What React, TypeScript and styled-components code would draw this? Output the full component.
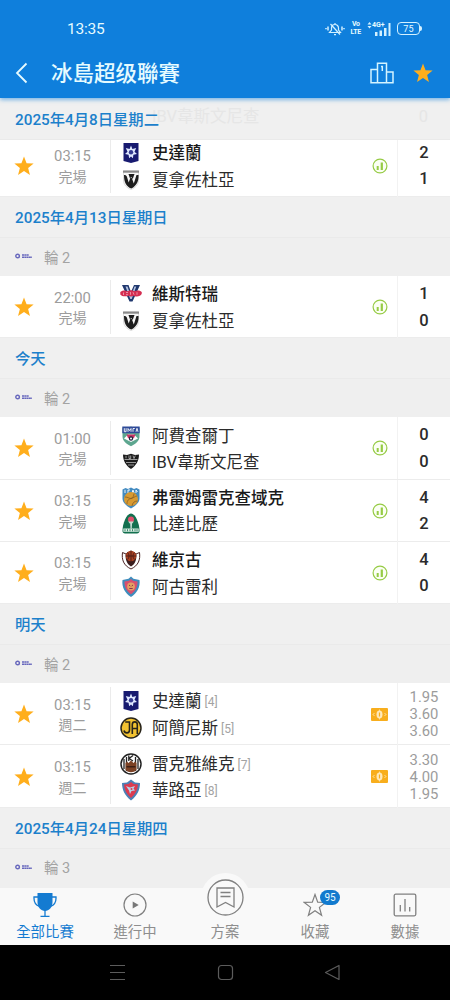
import type { ReactNode } from "react";
import styled, { createGlobalStyle } from "styled-components";

const GlobalStyle = createGlobalStyle`
  * {
    box-sizing: border-box;
  }

  body {
    margin: 0;
    background: #000;
    font-family: Roboto, "Noto Sans CJK TC", sans-serif;
  }

  svg {
    display: block;
  }
`;

type Team = {
  name: string;
  crest: string;
  winner?: boolean;
  rank?: number;
};

type Match = {
  id: number;
  time: string;
  status: string;
  teams: Team[];
  scores?: number[];
  odds?: string[];
};

type Day = {
  title: string;
  round?: string;
  matches: Match[];
};

const days: Day[] = [
  {
    title: "2025年4月13日星期日",
    round: "輪 2",
    matches: [
      {
        id: 2,
        time: "22:00",
        status: "完場",
        teams: [
          { name: "維斯特瑞", crest: "vestri", winner: true },
          { name: "夏拿佐杜亞", crest: "haf" },
        ],
        scores: [1, 0],
      },
    ],
  },
  {
    title: "今天",
    round: "輪 2",
    matches: [
      {
        id: 3,
        time: "01:00",
        status: "完場",
        teams: [
          { name: "阿費查爾丁", crest: "umfa" },
          { name: "IBV韋斯文尼查", crest: "ibv" },
        ],
        scores: [0, 0],
      },
      {
        id: 4,
        time: "03:15",
        status: "完場",
        teams: [
          { name: "弗雷姆雷克查域克", crest: "fram", winner: true },
          { name: "比達比歷", crest: "breida" },
        ],
        scores: [4, 2],
      },
      {
        id: 5,
        time: "03:15",
        status: "完場",
        teams: [
          { name: "維京古", crest: "vikingur", winner: true },
          { name: "阿古雷利", crest: "ka" },
        ],
        scores: [4, 0],
      },
    ],
  },
  {
    title: "明天",
    round: "輪 2",
    matches: [
      {
        id: 6,
        time: "03:15",
        status: "週二",
        teams: [
          { name: "史達蘭", crest: "stjarnan", rank: 4 },
          { name: "阿簡尼斯", crest: "ia", rank: 5 },
        ],
        odds: ["1.95", "3.60", "3.60"],
      },
      {
        id: 7,
        time: "03:15",
        status: "週二",
        teams: [
          { name: "雷克雅維克", crest: "kr", rank: 7 },
          { name: "華路亞", crest: "valur", rank: 8 },
        ],
        odds: ["3.30", "4.00", "1.95"],
      },
    ],
  },
  { title: "2025年4月24日星期四", round: "輪 3", matches: [] },
];

const stickyMatch: Match = {
  id: 1,
  time: "03:15",
  status: "完場",
  teams: [
    { name: "史達蘭", crest: "stjarnan", winner: true },
    { name: "夏拿佐杜亞", crest: "haf" },
  ],
  scores: [2, 1],
};

const crests: Record<string, ReactNode> = {
  stjarnan: (
    <>
      <path d="M3.5 1h15v18l-7.500 2-7.500-2z" fill="#171a70" />
      <path
        d="M11 3.500l1.400 3.600 3.800-1-1.700 3.600 2.500 2.300-3.600.7-.5 3.500L11 14.500l-1.900 1.700-.5-3.500-3.600-.7 2.500-2.300L5.800 6.100l3.800 1z"
        fill="#dfe8ff"
      />
      <circle cx="11" cy="10.300" r="2.200" fill="#353b91" />
    </>
  ),
  haf: (
    <>
      <path
        d="M3.500 2h15v9c0 5-3.500 8-7.500 9.500C7 19 3.500 16 3.500 11z"
        fill="#f7f7f7"
        stroke="#bbb"
        strokeWidth="0.5"
      />
      <path d="M3 1.500h16v2.200H3z" fill="#8a8a8a" />
      <path
        d="M4 6c1.700 0 2.500.5 3 2l1.700 5.500L10.300 9h1.500l2 5.500L16.500 6h2c.3 6-1.700 10.800-7.200 13.500C6.200 17.500 4 13.500 4 6z"
        fill="#1c1c1c"
      />
      <path d="M8.500 5h6l-1.800 5-1.500-2-1.200 1.500z" fill="#1c1c1c" />
    </>
  ),
  vestri: (
    <>
      <path d="M2 2h6.500L11 9l3-7h6l-7.500 16.500h-3z" fill="#20386e" />
      <path d="M5.500 3.500h2l3.500 10 3.500-10h1.700L11.700 16h-1.400z" fill="#b5c4e2" />
      <path
        d="M.3 9c3-2 5-1.500 7.500-.8 2-1.200 4.700-1.200 6.400 0 2.500-.8 5-1.200 7.500.8.5 2-.5 3.500-3.400 4.200-2 .3-3 .7-4.600-.4-2 1-3.500 1-5.200 0C6 13.700 1.500 13.500.3 11.500z"
        fill="#d42e52"
      />
      <path
        d="M3.500 9.500v2.500M6 9.500h2M6 11.700h2M10.500 9v2.800M13 9.200l1 2.500M17 9.200v2.600"
        stroke="#f3b8c6"
        strokeWidth="0.700"
        fill="none"
      />
    </>
  ),
  umfa: (
    <>
      <path
        d="M2.500 2.500l3 1.500L11 1.500 16.500 4l3-1.500v9c0 4-3.500 7.500-8.500 9.700C6 19 2.500 15.500 2.500 11.500z"
        fill="#5da68f"
      />
      <path d="M2.300 1.500h17.400v6.700H2.300z" fill="#2e4a98" />
      <path
        d="M4.300 3.200v3.500h1.800V3.200M8 6.800V3.500l1.500 2L11 3.500v3.300M13 6.800V3.500h1.800M16 6.800l1-3.500 1 3.500"
        stroke="#fff"
        strokeWidth="0.900"
        fill="none"
      />
      <path d="M4 13.500l4-4h6l4 4-7 3.500z" fill="#fff" />
      <path d="M6.500 9.500h9L14 13H8z" fill="#c93463" />
      <circle cx="11" cy="13.500" r="2.200" fill="#20243e" />
      <circle cx="11" cy="13.500" r="1" fill="#fff" />
    </>
  ),
  ibv: (
    <>
      <path
        d="M3 3.500l4 .5 4-1.200L15 4l4-.5c0 6.500-3 11-8 14.500C6 14.500 3 10 3 3.500z"
        fill="#1d1d1d"
      />
      <path
        d="M4.500 8.500h13M6 11.500h10M8 14h6M6 4.800v2.500M9 4.500v3h1.700v-3M13 4.600l1 2.900 1.300-2.900"
        stroke="#cfcfcf"
        strokeWidth="0.700"
        fill="none"
      />
    </>
  ),
  fram: (
    <>
      <path
        d="M2.500 2.500l3-1.500 2.500 1 3-1.500L14 2l2.500-1 3 1.500v9c0 4-4 7.500-8.500 10-4.500-2.500-8.500-6-8.500-10z"
        fill="#438bc1"
      />
      <path
        d="M5 6V2.800M8 6V3h2M12 6l1-3 1 3M16 6V3l1.500 2"
        stroke="#fff"
        strokeWidth="0.900"
        fill="none"
      />
      <circle cx="11" cy="12" r="7" fill="#d89a31" />
      <path
        d="M5 10c3 0 4 1.500 6 1.500S15 9 17 9M7 17c0-4 2-5 4-5.500s3-3 3-5M12 19c.5-3 2-5 5.500-5"
        stroke="#875e26"
        strokeWidth="0.800"
        fill="none"
      />
    </>
  ),
  breida: (
    <>
      <path
        d="M11 .500c4.500 0 8.500 10 8.500 17.500 0 1.500-1 2.500-2.500 2.500H5c-1.500 0-2.500-1-2.500-2.500C2.500 10.500 6.500.500 11 .500z"
        fill="#13704f"
      />
      <path d="M3.300 15.500h15.400v3.300H3.300z" fill="#d9ece2" />
      <path
        d="M5 16.200v2M7.500 16.200v2M10 16.200v2M12.500 16.200v2M15 16.200v2M17 16.200v2"
        stroke="#13704f"
        strokeWidth="0.800"
      />
      <path d="M10.300 8h1.600l-.3 7.500h-1z" fill="#fff" />
      <circle cx="11" cy="6.500" r="3" fill="#e0506d" />
      <path d="M8.200 8.500h5.600l-1.500 2H9.700z" fill="#c4dccf" />
    </>
  ),
  vikingur: (
    <>
      <path
        d="M2.500 3.500L6 5l5-3 5 3 3.500-1.500c1 7-1 13-8.500 16.500C3.500 16.500 1.500 10.500 2.500 3.500z"
        fill="#fff"
        stroke="#4b2425"
        strokeWidth="1"
      />
      <path
        d="M5.500 5.500L11 2l5.500 3.500c0 6-1.500 9.500-5.500 12-4-2.500-5.500-6-5.500-12z"
        fill="#3b1d1e"
      />
      <circle cx="11" cy="7" r="5.300" fill="#a84022" />
      <path
        d="M6 7h10M11 1.700v10.600M7.500 3.500c2 2 2 5 0 7M14.500 3.500c-2 2-2 5 0 7"
        stroke="#401b17"
        strokeWidth="0.800"
        fill="none"
      />
    </>
  ),
  ka: (
    <>
      <path
        d="M11 .5l2.500 2.200L19.500 4c1 7-2.500 13-8.500 17C5 17 1.500 11 2.500 4l6-1.300z"
        fill="#3f8dbd"
      />
      <path
        d="M11 3l2 1.700 4.500.8c.3 5-2.200 9.800-6.500 12.800C6.700 15.300 4.200 10.500 4.500 5.500L9 4.700z"
        fill="#d8506f"
      />
      <circle cx="11" cy="10.500" r="3.900" fill="#e4a062" />
      <path
        d="M9 9l1.300 1M13 9l-1.300 1M9.300 12.500h3.400"
        stroke="#8d3049"
        strokeWidth="1"
      />
    </>
  ),
  ia: (
    <>
      <circle
        cx="11"
        cy="11"
        r="10"
        fill="#f2c231"
        stroke="#28241a"
        strokeWidth="1.500"
      />
      <path
        d="M4 13.500c.5 3 5.500 3.500 5.500-.5V5H5.200M12.300 17V7.500c0-3.500 5-3.500 5 0V17M12.300 11.500h5"
        stroke="#28241a"
        strokeWidth="1.600"
        fill="none"
      />
    </>
  ),
  kr: (
    <>
      <circle
        cx="11"
        cy="11"
        r="10"
        fill="#fff"
        stroke="#222"
        strokeWidth="1.500"
      />
      <path
        d="M4 6v10M6.500 4v14M15.500 4v14M18 6v10"
        stroke="#222"
        strokeWidth="1.300"
      />
      <path
        d="M8.800 2.500V8M13 2.500L9 5.500 13 8"
        stroke="#222"
        strokeWidth="1.300"
        fill="none"
      />
      <path
        d="M5.500 10l1.500-1.500 1.500 1.500L11 7.500l2.500 2.500L15 8.500l1.500 1.500v7c-3 3-8 3-11 0z"
        fill="#7c4225"
      />
      <path d="M6.500 13h9v1.500h-9z" fill="#3f2015" />
    </>
  ),
  valur: (
    <>
      <path
        d="M2 4l5-.5 4-3 4 3 5 .5c0 7-3 13-9 17.500C5 17 2 11 2 4z"
        fill="#4c80b5"
      />
      <path
        d="M4 5.500l4.500-.5L11 3l2.500 2 4.500.5c-.3 5-2.500 9.800-7 13.500C6.500 15.300 4.300 10.500 4 5.500z"
        fill="#dc3b50"
      />
      <path
        d="M6 7l4 1.500L15 7l-1.500 2.500 1.500 2-3.500.5-1.500 3-1-3.500z"
        fill="#b6d2e8"
      />
      <circle cx="11.500" cy="10" r="1" fill="#dc3b50" />
    </>
  ),
};

const Screen = styled.div`
  display: flex;
  flex-direction: column;
  width: 450px;
  height: 1000px;
  overflow: hidden;
`;

const Header = styled.header`
  position: relative;
  z-index: 3;
  flex: none;
  height: 98px;
  background: #0f7fdc;
  color: #e6fbff;
  box-shadow: 0 2px 4px rgba(80, 160, 225, 0.7);
`;

const StatusBar = styled.div`
  display: flex;
  align-items: center;
  justify-content: space-between;
  height: 48px;
  padding: 9px 28px 0 67px;
  font-size: 15.5px;
  letter-spacing: -0.2px;
`;

const StatusIcons = styled.div`
  display: flex;
  align-items: center;
  gap: 6px;
`;

const NetworkLabel = styled.span`
  display: flex;
  flex-direction: column;
  align-items: center;
  font-size: 7px;
  font-weight: 700;
  line-height: 7.500px;
  letter-spacing: -0.3px;
`;

const Signal = styled.div`
  position: relative;
  width: 24px;
  height: 14px;
`;

const SignalLabel = styled.span`
  position: absolute;
  top: 0;
  left: 5px;
  font-size: 7px;
  font-weight: 700;
  line-height: 7px;
  letter-spacing: 0;
`;

const Battery = styled.span`
  display: flex;
  align-items: center;
  justify-content: center;
  width: 23px;
  height: 13px;
  border: 1.5px solid #d4f1ff;
  border-radius: 4px;
  font-size: 9px;
  letter-spacing: 0.3px;
`;

const BatteryTip = styled.span`
  width: 2px;
  height: 5px;
  margin-left: -6px;
  border-radius: 0 2px 2px 0;
  background: #d4f1ff;
`;

const TitleBar = styled.div`
  display: flex;
  align-items: center;
  height: 50px;
  padding: 0 16px 0 15px;
`;

const Title = styled.h1`
  flex: 1;
  margin: 1px 0 0 22px;
  font-family: Roboto, "Noto Sans CJK SC", sans-serif;
  font-size: 21.5px;
  font-weight: 500;
  line-height: 30px;
`;

const TitleActions = styled.div`
  display: flex;
  align-items: center;
  gap: 18px;
`;

const List = styled.main`
  flex: 1;
  min-height: 0;
  overflow: hidden;
  background: #efefef;
`;

const DateHeader = styled.div<{ $sticky?: boolean }>`
  position: relative;
  z-index: ${(props) => (props.$sticky ? 1 : 0)};
  display: flex;
  align-items: center;
  height: ${(props) => (props.$sticky ? 41.5 : 41)}px;
  padding: 0 0 ${(props) => (props.$sticky ? 1 : 2)}px 15px;
  border-bottom: 1px solid #eaeaea;
  background: #f0f0f0;
  color: #1c80cb;
  font-size: 15.3px;
  font-weight: 500;
`;

// match row that shows faintly through the sticky date
const Ghost = styled.div`
  position: absolute;
  top: 8px;
  left: 152px;
  right: 22px;
  z-index: -1;
  display: flex;
  justify-content: space-between;
  color: #e6e6e6;
  font-size: 16.5px;
  font-weight: 400;
  line-height: 22px;
`;

const RoundHeader = styled.div`
  display: flex;
  align-items: center;
  gap: 12px;
  height: 38px;
  padding: 0 0 2px 15px;
  color: #a3a3a3;
  font-size: 14.500px;
`;

const Row = styled.div<{ $tucked?: boolean }>`
  display: grid;
  grid-template-columns: 48px 49px 1fr 35px 53px;
  height: 62.3px;
  margin-top: ${(props) => (props.$tucked ? "-4.8px" : "0")};
  border-bottom: 1px solid #ececec;
  background: #fff;
`;

const StarCell = styled.div`
  display: flex;
  align-items: center;
  justify-content: center;
`;

const TimeCell = styled.div`
  display: flex;
  flex-direction: column;
  align-items: center;
  justify-content: center;
  padding-top: 2px;
  color: #9c9c9c;
  font-size: 14.8px;
  line-height: 20.5px;
`;

const StatusText = styled.span`
  font-size: 14px;
`;

const Teams = styled.div`
  display: flex;
  flex-direction: column;
  margin: 4px 0 4px 13px;
  padding: 1px 0 0 9px;
  border-left: 1px solid #ebebeb;
`;

const TeamLine = styled.div`
  display: flex;
  flex: none;
  align-items: center;
  height: 26.6px;
`;

const TeamName = styled.span<{ $winner?: boolean }>`
  padding-top: 2px;
  margin-left: 10px;
  color: ${(props) => (props.$winner ? "#1a1a1a" : "#2b2b2b")};
  font-size: 16.5px;
  font-weight: ${(props) => (props.$winner ? 500 : 400)};
  line-height: 22px;
  white-space: nowrap;
`;

const Rank = styled.span`
  padding-top: 2px;
  margin-left: 3px;
  color: #a3a3a3;
  font-size: 12px;
`;

const InfoCell = styled.div`
  display: flex;
  align-items: center;
  justify-content: center;
`;

const ScoreCell = styled.div`
  display: flex;
  flex-direction: column;
  align-items: center;
  justify-content: center;
  padding-top: 1px;
  border-left: 1px solid #f2f2f2;
`;

const Score = styled.span`
  color: #2b2b2b;
  font-size: 16.5px;
  font-weight: 500;
  line-height: 26.6px;
`;

const Odd = styled.span`
  color: #9c9c9c;
  font-size: 14.8px;
  line-height: 17px;
`;

const TabBar = styled.nav`
  position: relative;
  z-index: 1;
  display: flex;
  flex: none;
  height: 57px;
  background: #f9f9f9;
`;

const Tab = styled.div<{ $active?: boolean }>`
  display: flex;
  flex: 1;
  flex-direction: column;
  align-items: center;
  justify-content: flex-end;
  padding-bottom: 2px;
  color: ${(props) => (props.$active ? "#147bd1" : "#8e8e8e")};
  font-size: 14.4px;
  line-height: 20px;
`;

const TabIcon = styled.div`
  position: relative;
  margin-bottom: 6px;
`;

const CenterIcon = styled.div`
  padding: 6px;
  margin-bottom: 1px;
  border-radius: 50%;
  background: #f9f9f9;
`;

const Badge = styled.span`
  position: absolute;
  top: -3px;
  left: 17px;
  width: 20px;
  height: 15px;
  border-radius: 8px;
  background: #127ace;
  color: #e8faff;
  font-size: 10px;
  line-height: 15px;
  text-align: center;
`;

const SystemNav = styled.div`
  display: flex;
  flex: none;
  align-items: center;
  justify-content: space-between;
  height: 55px;
  padding: 0 109px;
  background: #000;
`;

const starPath =
  "M12 1.500l2.800 7.400 7.700.3-6 4.900 2 7.600L12 17.400l-6.500 4.300 2-7.600-6-4.900 7.700-.3z";

function FavouriteStar() {
  return (
    <svg width="22" height="22" viewBox="0 0 24 24">
      <path d={starPath} fill="#ffae1c" />
    </svg>
  );
}

function Crest({ id }: { id: string }) {
  return (
    <svg width="22" height="22" viewBox="0 0 22 22">
      {crests[id]}
    </svg>
  );
}

function StatsIcon() {
  return (
    <svg width="16" height="16" viewBox="0 0 16 16" fill="#96cb45">
      <circle cx="8" cy="8" r="6.900" fill="#fbfff4" stroke="#96cb45" strokeWidth="1.200" />
      <path d="M4.700 8h2v4h-2zM8.700 4.500h2.200V12H8.700z" />
    </svg>
  );
}

function OddsIcon() {
  return (
    <svg width="17" height="13" viewBox="0 0 17 13">
      <rect width="17" height="13" rx="1" fill="#f8ae1d" />
      <ellipse cx="8.500" cy="6.500" rx="3" ry="3.900" fill="#ffe9b9" />
      <path d="M8.500 1.500v10" stroke="#ffe9b9" strokeWidth="0.800" />
      <path d="M8.500 4.500v4" stroke="#f8ae1d" strokeWidth="1.200" />
      <path d="M3.300 5.200L2.100 6.500l1.200 1.300M13.700 5.200l1.200 1.300-1.200 1.300" stroke="#ffe9b9" fill="none" />
    </svg>
  );
}

function LeagueLogo() {
  return (
    <svg width="17" height="6" viewBox="0 0 17 6" stroke="#6868bd" fill="none">
      <circle cx="2.600" cy="3" r="1.800" strokeWidth="1.400" />
      <path d="M7 2.100h7M7 4.200h10" strokeWidth="1.500" strokeDasharray="2 .3" />
    </svg>
  );
}

function MatchRow({ match, tucked }: { match: Match; tucked?: boolean }) {
  return (
    <Row $tucked={tucked}>
      <StarCell>
        <FavouriteStar />
      </StarCell>
      <TimeCell>
        <span>{match.time}</span>
        <StatusText>{match.status}</StatusText>
      </TimeCell>
      <Teams>
        {match.teams.map((team) => (
          <TeamLine key={team.name}>
            <Crest id={team.crest} />
            <TeamName $winner={team.winner}>{team.name}</TeamName>
            {team.rank && <Rank>[{team.rank}]</Rank>}
          </TeamLine>
        ))}
      </Teams>
      <InfoCell>{match.odds ? <OddsIcon /> : <StatsIcon />}</InfoCell>
      <ScoreCell>
        {match.scores?.map((score, i) => <Score key={i}>{score}</Score>)}
        {match.odds?.map((odd, i) => <Odd key={i}>{odd}</Odd>)}
      </ScoreCell>
    </Row>
  );
}

export default function App() {
  return (
    <>
      <GlobalStyle />
      <Screen>
        <Header>
          <StatusBar>
            <span>13:35</span>
            <StatusIcons>
              <svg width="20" height="14" viewBox="0 0 20 14" fill="none" stroke="#d4f1ff" strokeWidth="1.200">
                <path d="M4.500 10.500h11L13.500 8V6a3.500 3.500 0 0 0-7 0v2zM10 2.500V1M9 12.700h2M5.500 2l9.500 10.500" />
                <path d="M3 4.500v4M17 4.500v4M1 6v1.200M19 6v1.200" strokeWidth="1.500" />
              </svg>
              <NetworkLabel>
                <span>Vo</span>
                <span>LTE</span>
              </NetworkLabel>
              <Signal>
                <SignalLabel>4G+</SignalLabel>
                <svg width="24" height="14" viewBox="0 0 24 14" fill="#d4f1ff">
                  <path d="M2.500 0l2 2.500h-4zM2.500 6.500l2-2.500h-4zM8 10h2.500v4H8zM12.500 8.500H15V14h-2.500zM17 6h2.500v8H17zM21.500 1h2v13h-2z" />
                </svg>
              </Signal>
              <Battery>75</Battery>
              <BatteryTip />
            </StatusIcons>
          </StatusBar>
          <TitleBar>
            <svg width="14" height="22" viewBox="0 0 14 22" fill="none" stroke="#e6fbff" strokeWidth="1.800">
              <path d="M11.500 1.500L2 11l9.500 9.500" />
            </svg>
            <Title>冰島超级聯賽</Title>
            <TitleActions>
              <svg width="24" height="22" viewBox="0 0 24 22" fill="none" stroke="#d4f4ff" strokeWidth="1.500">
                <path d="M7.500 20.700V1.200h9v19.500M7.500 7.500H1v13.200h22V10h-6.500M11 4.500h1.300V9" />
              </svg>
              <FavouriteStar />
            </TitleActions>
          </TitleBar>
        </Header>
        <List>
          <DateHeader $sticky>
            <Ghost>
              <span>IBV韋斯文尼查</span>
              <span>0</span>
            </Ghost>
            2025年4月8日星期二
          </DateHeader>
          <MatchRow match={stickyMatch} tucked />
          {days.map((day) => (
            <section key={day.title}>
              <DateHeader>{day.title}</DateHeader>
              <RoundHeader>
                <LeagueLogo />
                {day.round}
              </RoundHeader>
              {day.matches.map((match) => (
                <MatchRow key={match.id} match={match} />
              ))}
            </section>
          ))}
        </List>
        <TabBar>
          <Tab $active>
            <TabIcon>
              <svg width="24" height="24" viewBox="0 0 24 24" fill="none" stroke="#147bd1" strokeWidth="1.300">
                <path d="M4.500 0h15v9c0 5.500-3.500 9-7.500 9s-7.500-3.500-7.500-9z" fill="#147bd1" stroke="none" />
                <path d="M5 4H1c-.3 5 1 8 5.500 9.500M19 4h4c.3 5-1 8-5.500 9.500M12 17v6M7.500 23.300h9" />
              </svg>
            </TabIcon>
            全部比賽
          </Tab>
          <Tab>
            <TabIcon>
              <svg width="24" height="24" viewBox="0 0 24 24" fill="none" stroke="#808080" strokeWidth="1.200">
                <circle cx="12" cy="12" r="11" />
                <path d="M9.700 8.500l6 3.500-6 3.500z" fill="#777" stroke="none" />
              </svg>
            </TabIcon>
            進行中
          </Tab>
          <Tab>
            <CenterIcon>
              <svg width="37" height="37" viewBox="0 0 37 37" fill="none" stroke="#808080" strokeWidth="1.300">
                <circle cx="18.500" cy="18.500" r="17.500" />
                <path d="M10 9h17v19l-8.500-4.500L10 28zM13.500 13.500h10M13.500 17.500h10" />
              </svg>
            </CenterIcon>
            方案
          </Tab>
          <Tab>
            <TabIcon>
              <svg width="24" height="24" viewBox="0 0 24 24" fill="none" stroke="#808080" strokeWidth="1.200">
                <path d="M12 1.500l2.700 7.700 8 .2-6.300 5 2.200 7.900-6.600-4.600-6.600 4.600 2.200-7.900-6.300-5 8-.2z" />
              </svg>
              <Badge>95</Badge>
            </TabIcon>
            收藏
          </Tab>
          <Tab>
            <TabIcon>
              <svg width="24" height="24" viewBox="0 0 24 24" fill="none" stroke="#808080" strokeWidth="1.300">
                <rect x="1.200" y="1.200" width="21.600" height="21.600" rx="1.500" />
                <path d="M7.300 12v6.500M12 6v12.500M16.700 14v4.500" />
              </svg>
            </TabIcon>
            數據
          </Tab>
        </TabBar>
        <SystemNav>
          <svg width="17" height="17" viewBox="0 0 17 17" stroke="#5c5c5c" strokeWidth="1.200">
            <path d="M1 1.500h15M1 8.500h15M1 15.500h15" />
          </svg>
          <svg width="17" height="17" viewBox="0 0 17 17" fill="none" stroke="#5c5c5c" strokeWidth="1.200">
            <rect x="1.500" y="1.500" width="14" height="14" rx="3" />
          </svg>
          <svg width="17" height="17" viewBox="0 0 17 17" fill="none" stroke="#5c5c5c" strokeWidth="1.200">
            <path d="M1.500 8.500L15 1.500v14z" strokeLinejoin="round" />
          </svg>
        </SystemNav>
      </Screen>
    </>
  );
}
